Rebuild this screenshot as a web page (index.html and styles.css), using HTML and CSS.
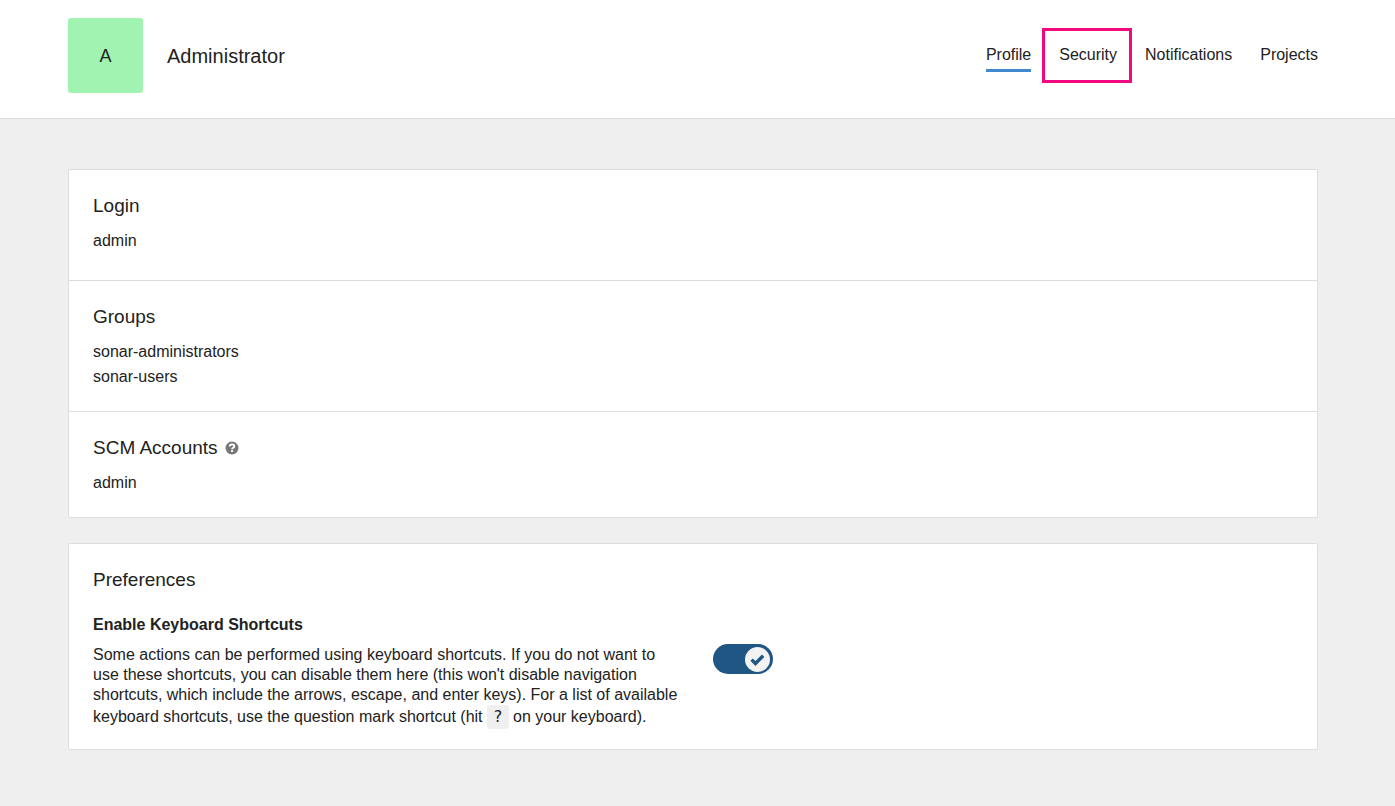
FILE: index.html
```html
<!DOCTYPE html>
<html lang="en">
<head>
<meta charset="utf-8">
<title>Administrator</title>
<link rel="stylesheet" href="styles.css">
</head>
<body>
<header class="account-header">
  <div class="avatar">A</div>
  <h1 class="account-name">Administrator</h1>
  <nav class="account-nav">
    <a class="nav-link active" href="#profile">Profile</a>
    <a class="nav-link highlighted" href="#security">Security</a>
    <a class="nav-link" href="#notifications">Notifications</a>
    <a class="nav-link" href="#projects">Projects</a>
  </nav>
</header>
<main class="account-body">
  <div class="card">
    <section class="card-section login-section">
      <h2 class="section-title">Login</h2>
      <p class="value">admin</p>
    </section>
    <section class="card-section">
      <h2 class="section-title">Groups</h2>
      <ul class="value-list">
        <li>sonar-administrators</li>
        <li>sonar-users</li>
      </ul>
    </section>
    <section class="card-section">
      <h2 class="section-title">SCM Accounts
        <svg class="help-icon" viewBox="0 0 14 14" aria-hidden="true">
          <circle cx="7" cy="7" r="6.5" fill="#777"/>
          <path d="M4.700 5.400C4.800 4 5.800 3.400 7 3.400c1.300 0 2.300.7 2.300 1.800 0 1.500-2.200 1.500-2.200 3" fill="none" stroke="#fff" stroke-width="1.900"/>
          <rect x="6.100" y="9.100" width="2" height="1.900" fill="#fff"/>
        </svg>
      </h2>
      <ul class="value-list">
        <li>admin</li>
      </ul>
    </section>
  </div>
  <div class="card">
    <section class="card-section preferences">
      <h2 class="section-title">Preferences</h2>
      <h3 class="setting-title" id="shortcuts-title">Enable Keyboard Shortcuts</h3>
      <div class="setting">
        <p class="setting-text">Some actions can be performed using keyboard shortcuts. If you do not want to use these shortcuts, you can disable them here (this won't disable navigation shortcuts, which include the arrows, escape, and enter keys). For a list of available keyboard shortcuts, use the question mark shortcut (hit <kbd class="key">?</kbd> on your keyboard).</p>
        <button class="toggle" type="button" role="switch" aria-checked="true" aria-labelledby="shortcuts-title">
          <span class="toggle-handle">
            <svg class="check-icon" viewBox="0 0 14 14" aria-hidden="true">
              <path d="M1.500 7.100l3.600 3.600 7.200-7.200" fill="none" stroke="#1f5684" stroke-width="3.200"/>
            </svg>
          </span>
        </button>
      </div>
    </section>
  </div>
</main>
</body>
</html>
```
FILE: styles.css
```css
* {
  box-sizing: border-box;
}

body {
  margin: 0;
  background: #efefef;
  color: #222;
  font: 16px/20px "Liberation Sans", Arial, sans-serif;
}

h1, h2, h3, p, ul {
  margin: 0;
  padding: 0;
}

.account-header {
  display: flex;
  align-items: flex-start;
  padding: 18px 77px 25px 68px;
  border-bottom: 1px solid #ddd;
  background: #fff;
}

.avatar {
  width: 75px;
  padding-top: 2px;
  border-radius: 3px;
  background: #a0f3b0;
  font-size: 18px;
  line-height: 73px;
  text-align: center;
}

.account-name {
  margin-left: 24px;
  padding-top: 2px;
  font-size: 20px;
  font-weight: 400;
  line-height: 73px;
}

.account-nav {
  display: flex;
  gap: 28px;
  margin-left: auto;
  padding-top: 27px;
}

.nav-link {
  position: relative;
  padding-bottom: 4px;
  border-bottom: 3px solid transparent;
  color: inherit;
  text-decoration: none;
}

.nav-link.active {
  border-bottom-color: #4189cb;
}

.nav-link.highlighted::after {
  content: "";
  position: absolute;
  inset: -17px -15px -14px -17px;
  border: 3px solid #f0097f;
}

.account-body {
  display: flex;
  flex-direction: column;
  gap: 25px;
  padding: 50px 77px 56px 68px;
}

.card {
  border: 1px solid #ddd;
  border-radius: 2px;
  background: #fff;
}

.card-section {
  padding: 25px 24px 22px;
}

.card-section + .card-section {
  border-top: 1px solid #ddd;
}

.login-section {
  padding-bottom: 27px;
}

.section-title {
  display: flex;
  align-items: center;
  gap: 7px;
  margin-bottom: 11px;
  font-size: 19px;
  font-weight: 400;
  line-height: 22px;
}

.help-icon {
  width: 14px;
  height: 14px;
}

.value, .value-list {
  line-height: 25px;
  list-style: none;
}

.preferences {
  padding-bottom: 20px;
}

.preferences .section-title {
  margin-bottom: 24px;
}

.setting-title {
  margin-bottom: 9px;
  font-size: 16px;
  line-height: 20px;
}

.setting {
  display: flex;
  align-items: flex-start;
  gap: 32px;
}

.setting-text {
  max-width: 588px;
  padding-top: 1px;
}

.key {
  display: inline-block;
  padding: 0 6px;
  border-radius: 3px;
  background: #efefef;
  font: 16px/24px "DejaVu Sans Mono", monospace;
}

.toggle {
  display: flex;
  flex: none;
  justify-content: flex-end;
  width: 60px;
  height: 30px;
  padding: 3px;
  border: 0;
  border-radius: 15px;
  background: #1f5684;
}

.toggle-handle {
  display: flex;
  align-items: center;
  justify-content: center;
  width: 25px;
  height: 25px;
  border-radius: 50%;
  background: #f3f3f3;
}

.check-icon {
  width: 15px;
  height: 15px;
}
```
